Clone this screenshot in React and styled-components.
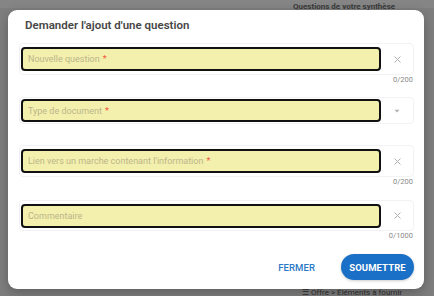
import React from 'react';
import styled, { createGlobalStyle } from 'styled-components';

const GlobalStyle = createGlobalStyle`
  html, body {
    margin: 0;
    padding: 0;
    width: 434px;
    height: 296px;
    overflow: hidden;
    font-family: Roboto, "Liberation Sans", sans-serif;
  }
`;

const Page = styled.div`
  position: relative;
  width: 434px;
  height: 296px;
  background: #7e7e7e;
  overflow: hidden;
`;

const TopBand = styled.div`
  height: 8px;
  background: #858585;
`;

const BehindTitle = styled.div`
  position: absolute;
  left: 293px;
  top: 2px;
  font-size: 8px;
  font-weight: 700;
  color: #3a3a3a;
  white-space: nowrap;
`;

const BehindCrumb = styled.div`
  position: absolute;
  left: 302px;
  top: 288px;
  font-size: 8px;
  color: #2e2e2e;
  white-space: nowrap;
`;

const Dialog = styled.div`
  position: absolute;
  left: 8px;
  top: 10px;
  width: 416px;
  height: 279px;
  background: #ffffff;
  border-radius: 9px;
  box-shadow: 0 4px 12px rgba(0, 0, 0, 0.25);
  box-sizing: border-box;
  padding: 0 10px 0 11px;
  display: flex;
  flex-direction: column;
`;

const Title = styled.h2`
  margin: 0;
  height: 30px;
  display: flex;
  align-items: center;
  padding-left: 6px;
  font-size: 11.5px;
  font-weight: 600;
  color: #474747;
`;

const Field = styled.div`
  margin-top: ${p => p.$top}px;
  display: flex;
  flex-direction: column;
`;

const Outline = styled.div`
  height: ${p => p.$h}px;
  border: 1px solid #f2f2f4;
  border-radius: 4px;
  box-sizing: border-box;
  display: flex;
  align-items: center;
  padding-left: 1px;
`;

const Input = styled.div`
  width: 360px;
  height: ${p => p.$h}px;
  box-sizing: border-box;
  background: #f3efad;
  border: 2px solid #111;
  border-radius: 4px;
  display: flex;
  align-items: center;
  padding-left: 5px;
  font-size: 9px;
  color: #bbb68a;
  white-space: nowrap;
`;

const Star = styled.span`
  color: #f05a3c;
  margin-left: 3px;
`;

const Adornment = styled.div`
  flex: 1;
  display: flex;
  justify-content: center;
  align-items: center;
  color: #b0b0b0;
`;

const Counter = styled.div`
  height: 9px;
  line-height: 9px;
  text-align: right;
  font-size: 7.5px;
  color: #8a8a8a;
  padding-right: 1px;
`;

const Actions = styled.div`
  margin-top: 14px;
  display: flex;
  justify-content: flex-end;
  align-items: center;
  gap: 26px;
`;

const TextButton = styled.button`
  border: none;
  background: none;
  padding: 0;
  font-family: inherit;
  font-size: 9.5px;
  font-weight: 500;
  color: #2a78c6;
  letter-spacing: 0.1px;
`;

const PrimaryButton = styled.button`
  width: 73px;
  height: 26px;
  border: none;
  border-radius: 13px;
  background: #1a6fc6;
  color: #fff;
  font-family: inherit;
  font-size: 9.5px;
  font-weight: 700;
  letter-spacing: 0.1px;
  box-shadow: 0 1px 3px rgba(0, 0, 0, 0.2);
`;

const CloseIcon = () => (
  <svg width="7" height="7" viewBox="0 0 7 7">
    <path d="M0.5 0.5L6.5 6.5M6.5 0.5L0.5 6.5" stroke="currentColor" strokeWidth="1" />
  </svg>
);

const CaretIcon = () => (
  <svg width="6" height="4" viewBox="0 0 6 4">
    <path d="M0.5 0.8L5.5 0.8L3 3.4Z" fill="currentColor" />
  </svg>
);

const fields = [
  { label: 'Nouvelle question', required: true, top: 3, h: 32, ih: 24, icon: 'close', counter: '0/200' },
  { label: 'Type de document', required: true, top: 13, h: 27, ih: 23, icon: 'caret' },
  { label: "Lien vers un marche contenant l'information", required: true, top: 21, h: 32, ih: 24, icon: 'close', counter: '0/200' },
  { label: 'Commentaire', required: false, top: 14, h: 31, ih: 24, icon: 'close', counter: '0/1000' },
];

const App = () => (
  <Page>
    <GlobalStyle />
    <TopBand />
    <BehindTitle>Questions de votre synthèse</BehindTitle>
    <BehindCrumb>☰ Offre &gt; Éléments à fournir</BehindCrumb>
    <Dialog>
      <Title>Demander l'ajout d'une question</Title>
      {fields.map(f => (
        <Field key={f.label} $top={f.top}>
          <Outline $h={f.h}>
            <Input $h={f.ih}>
              {f.label}
              {f.required && <Star>*</Star>}
            </Input>
            <Adornment>
              {f.icon === 'close' ? <CloseIcon /> : <CaretIcon />}
            </Adornment>
          </Outline>
          {f.counter && <Counter>{f.counter}</Counter>}
        </Field>
      ))}
      <Actions>
        <TextButton>FERMER</TextButton>
        <PrimaryButton>SOUMETTRE</PrimaryButton>
      </Actions>
    </Dialog>
  </Page>
);

export default App;
